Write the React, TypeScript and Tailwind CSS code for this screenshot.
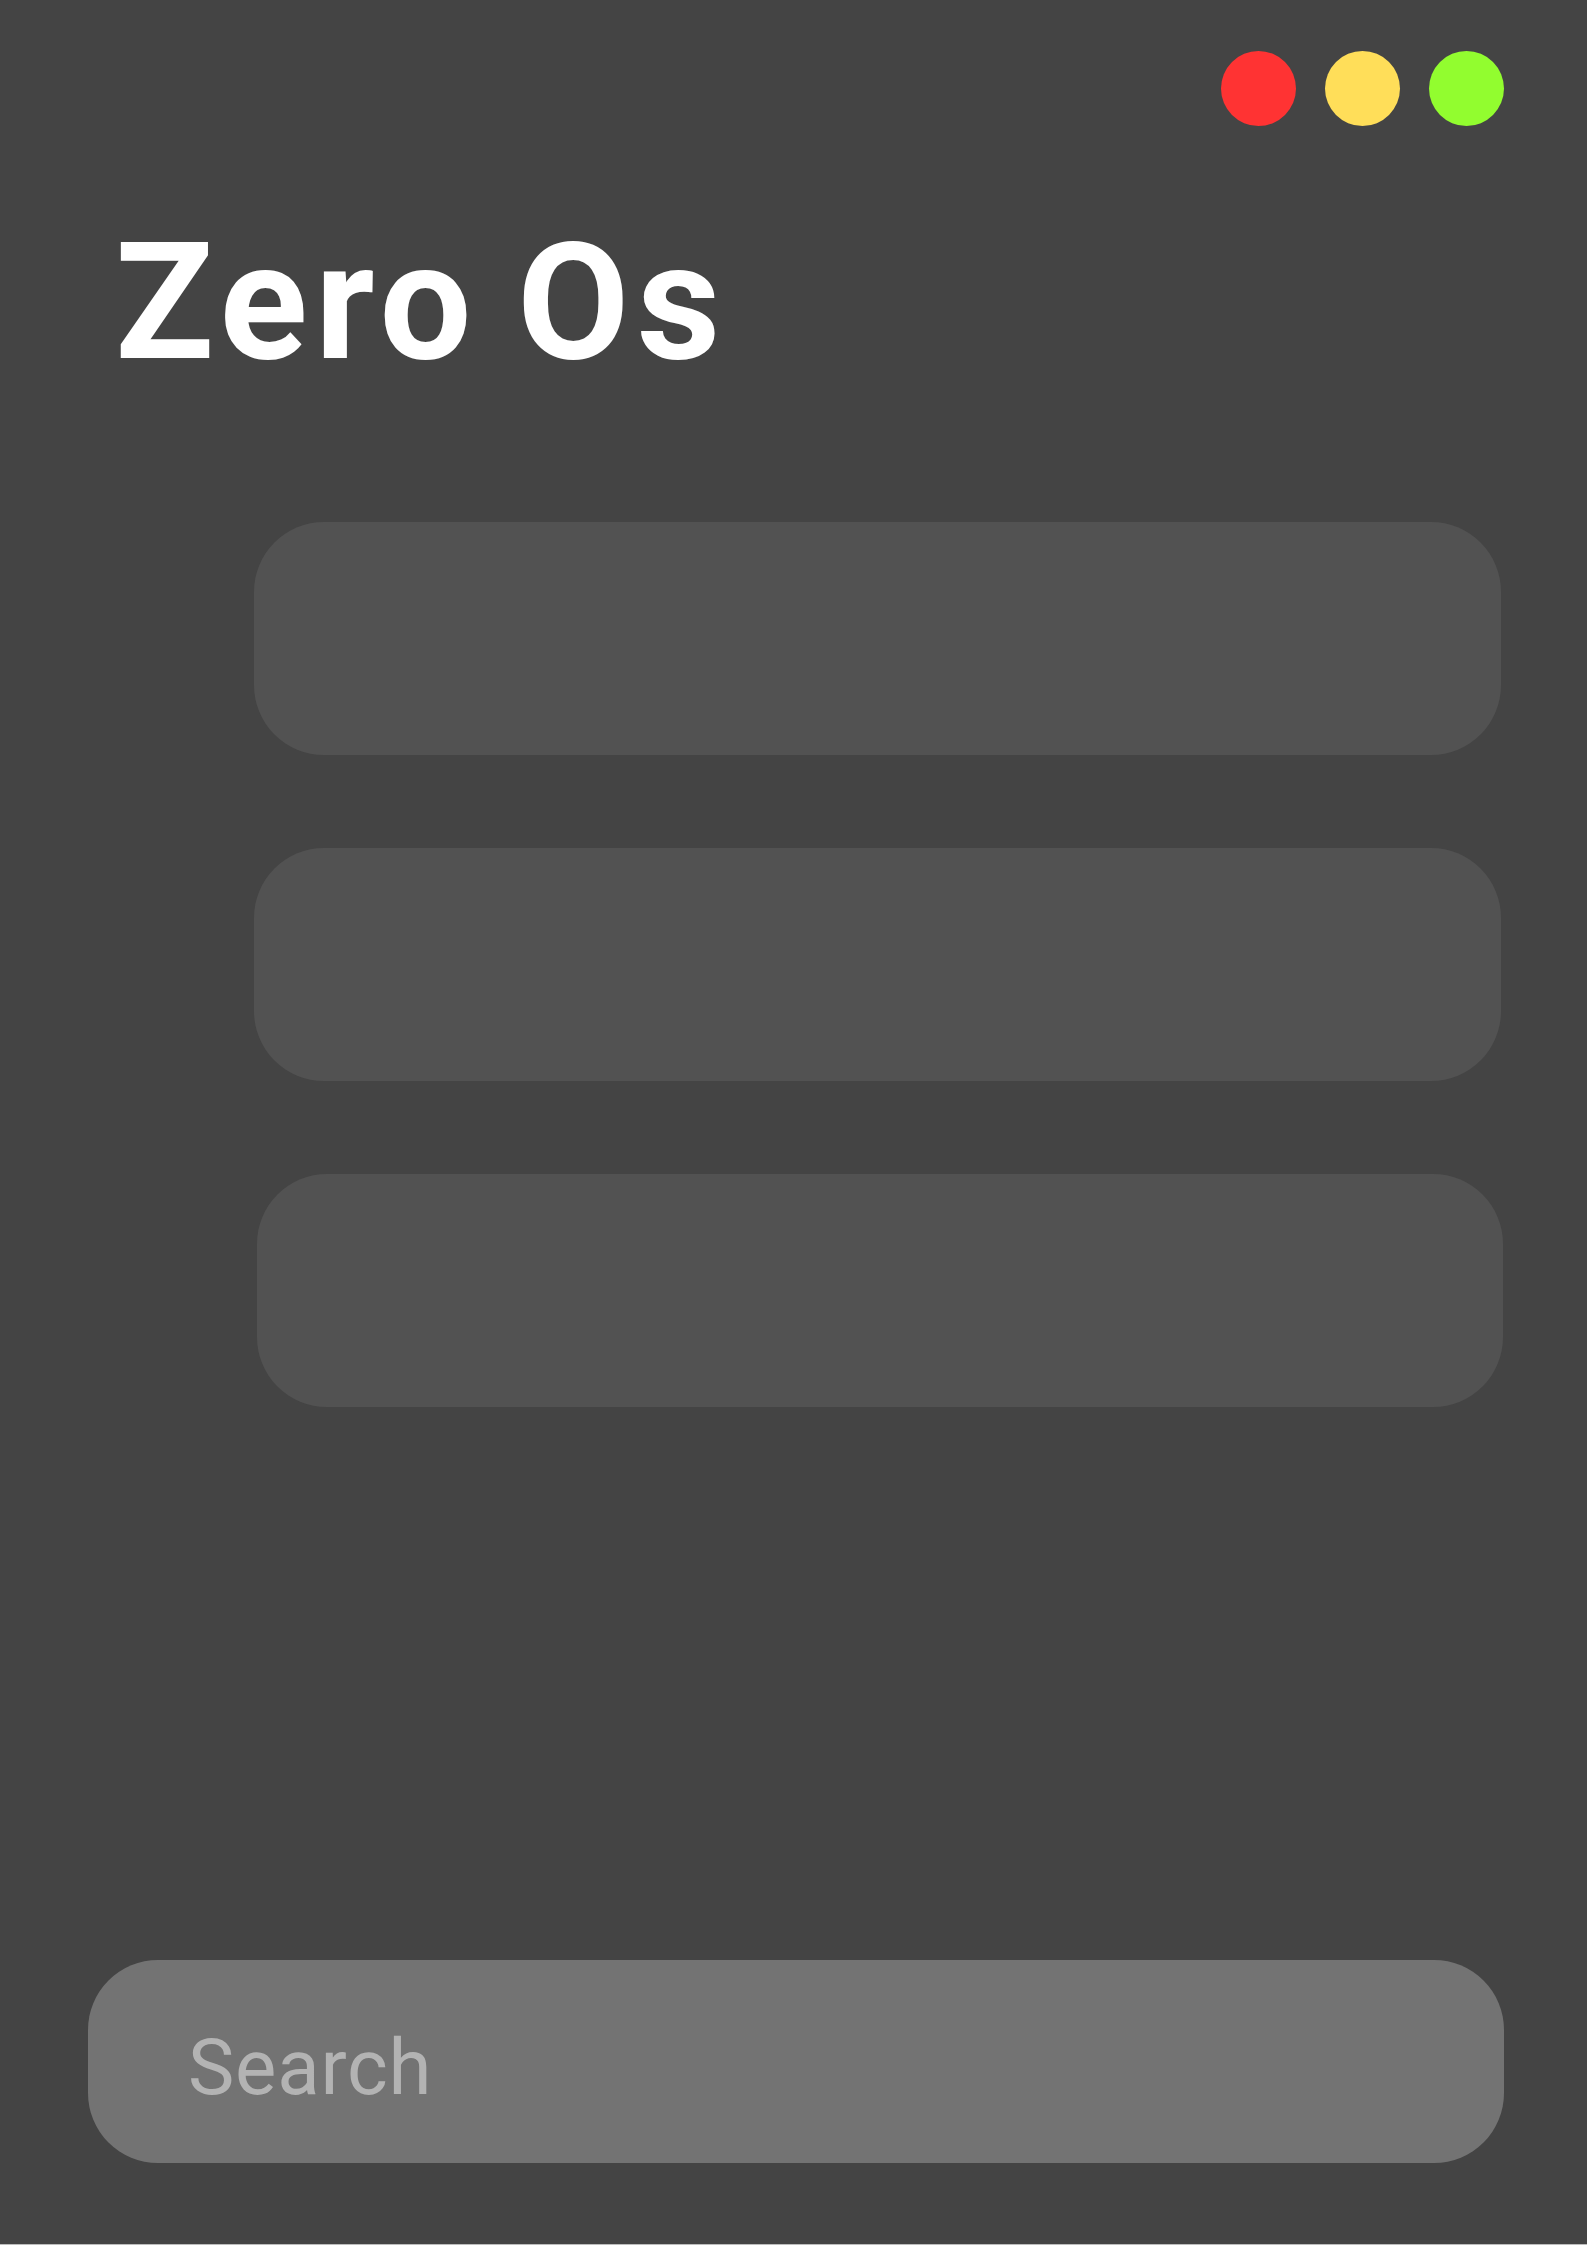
export default function App() {
  const cards = ["ml-[254px] mr-[86px]", "ml-[254px] mr-[86px]", "ml-[257px] mr-[84px]"];

  return (
    <div className="bg-[#bdbdbd] pb-px">
      <div className="flex h-[2244px] flex-col bg-[#444444] font-['Roboto',sans-serif]">
        {/* TRAFFIC LIGHTS */}
        <div className="flex justify-end gap-[29px] pr-[83px] pt-[51px]">
          <span className="h-[75px] w-[75px] rounded-full bg-[#ff3333]" />
          <span className="h-[75px] w-[75px] rounded-full bg-[#ffde59]" />
          <span className="h-[75px] w-[75px] rounded-full bg-[#92fd2f]" />
        </div>

        {/* TITLE */}
        <h1 className="ml-[115px] mt-[95px] text-[163px] font-bold leading-none tracking-[0.045em] text-white [word-spacing:-0.06em]">
          Zero Os
        </h1>

        {/* CARDS */}
        <div className="mt-[138px] flex flex-col gap-[93px]">
          {cards.map((c, i) => (
            <div key={i} className={`h-[233px] rounded-[70px] bg-[#525252] ${c}`} />
          ))}
        </div>

        {/* SEARCH */}
        <div className="mx-[83px] mb-[81px] ml-[88px] mt-auto flex h-[203px] items-center rounded-[70px] bg-[#737373] pl-[100px] pt-[13px]">
          <span className="text-[78px] font-normal leading-none tracking-[0.01em] text-[#b3b3b3]">Search</span>
        </div>
      </div>
    </div>
  );
}
